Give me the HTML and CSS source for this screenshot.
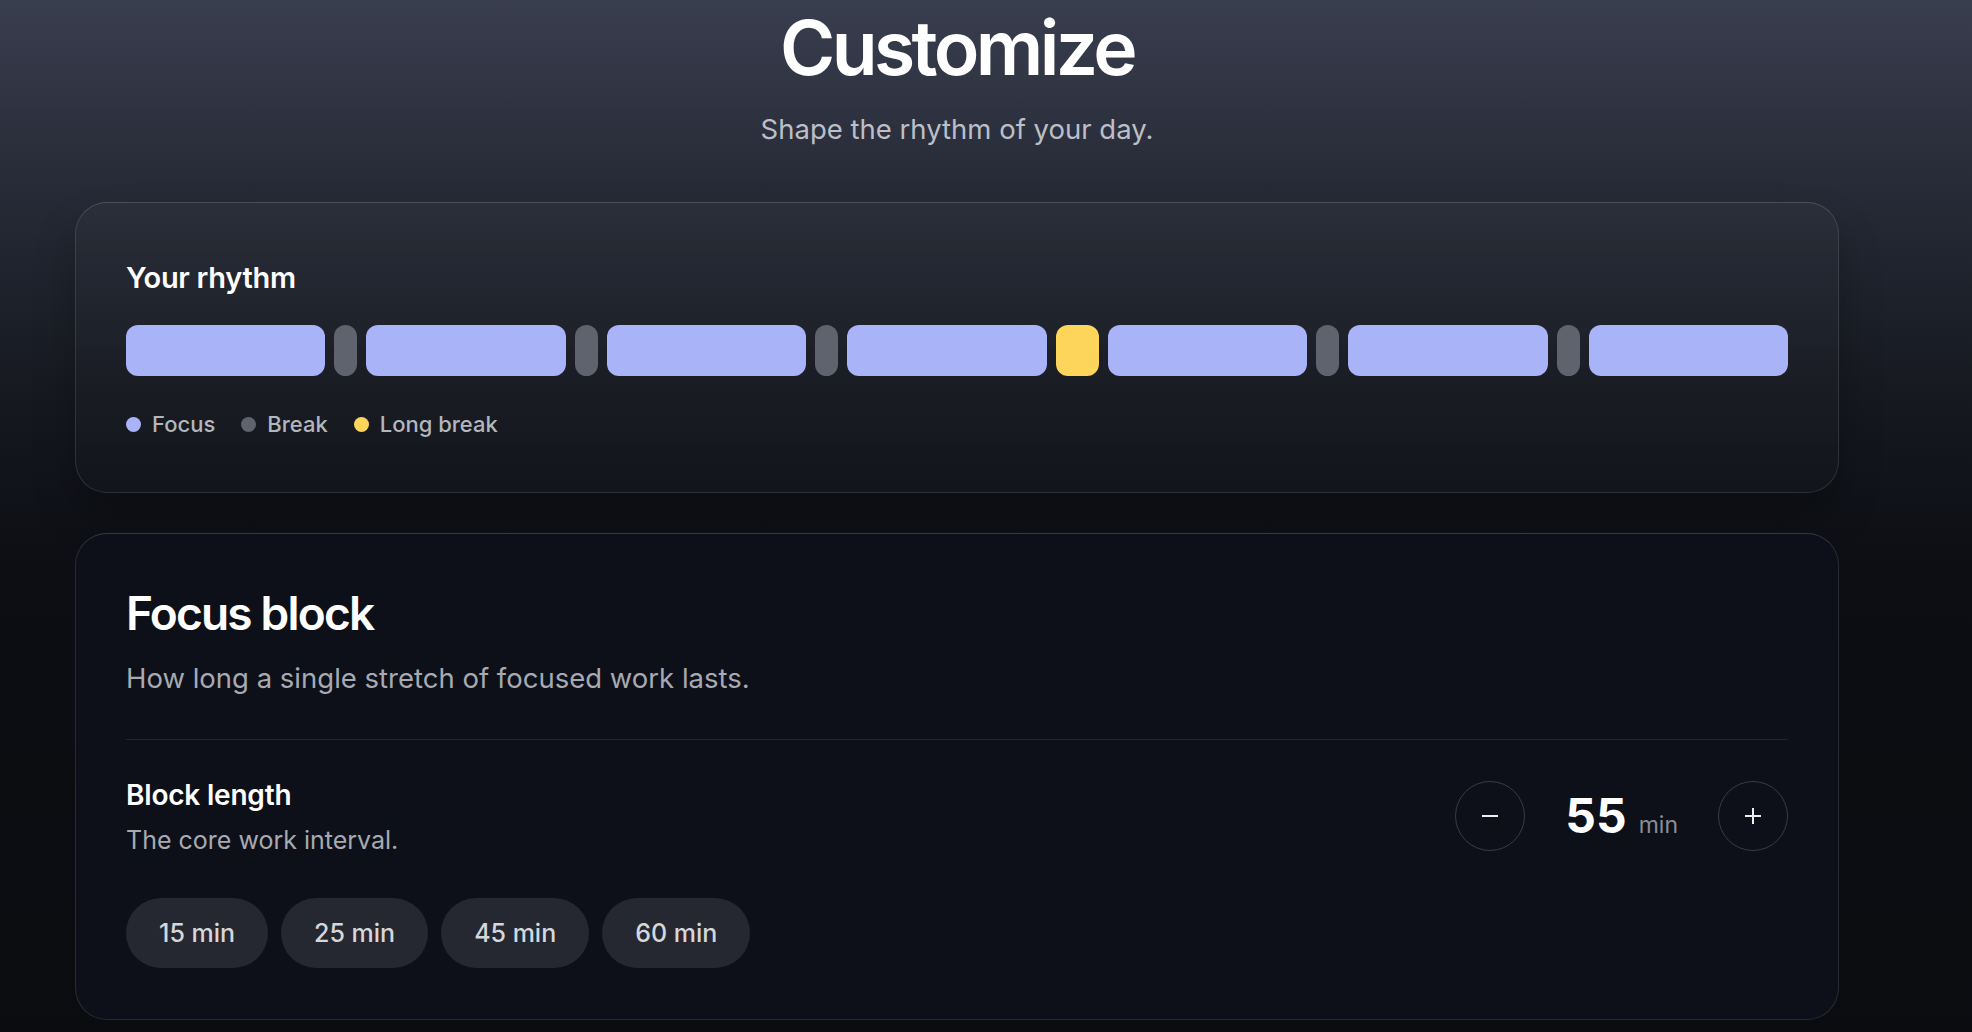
FILE: index.html
```html
<!DOCTYPE html>
<html lang="en">
<head>
  <meta charset="UTF-8" />
  <meta name="viewport" content="width=device-width, initial-scale=1.0"/>
  <title>Customize</title>
  <link rel="stylesheet" href="styles.css">
</head>
<body>
  <div class="page">
    <header class="page-head">
      <h1>Customize</h1>
      <p class="tagline">Shape the rhythm of your day.</p>
    </header>

    <section class="card rhythm-card">
      <h2 class="card-label">Your rhythm</h2>
      <div class="rhythm-bar">
        <div class="seg focus"></div>
        <div class="seg break"></div>
        <div class="seg focus"></div>
        <div class="seg break"></div>
        <div class="seg focus"></div>
        <div class="seg break"></div>
        <div class="seg focus"></div>
        <div class="seg long"></div>
        <div class="seg focus"></div>
        <div class="seg break"></div>
        <div class="seg focus"></div>
        <div class="seg break"></div>
        <div class="seg focus"></div>
      </div>
      <div class="legend">
        <span class="legend-item"><i class="dot focus"></i>Focus</span>
        <span class="legend-item"><i class="dot break"></i>Break</span>
        <span class="legend-item"><i class="dot long"></i>Long break</span>
      </div>
    </section>

    <section class="card block-card">
      <h2 class="block-title">Focus block</h2>
      <p class="block-desc">How long a single stretch of focused work lasts.</p>

      <div class="setting">
        <div class="setting-row">
          <div class="setting-text">
            <div class="setting-name">Block length</div>
            <div class="setting-hint">The core work interval.</div>
          </div>
          <div class="stepper">
            <button class="step-btn" id="minusBtn" aria-label="Decrease">
              <svg width="18" height="18" viewBox="0 0 18 18"><line x1="1" y1="9" x2="17" y2="9" /></svg>
            </button>
            <div class="step-value"><span id="blockValue">55</span><small>min</small></div>
            <button class="step-btn" id="plusBtn" aria-label="Increase">
              <svg width="18" height="18" viewBox="0 0 18 18"><line x1="1" y1="9" x2="17" y2="9" /><line x1="9" y1="1" x2="9" y2="17" /></svg>
            </button>
          </div>
        </div>

        <div class="presets">
          <button class="chip">15 min</button>
          <button class="chip">25 min</button>
          <button class="chip">45 min</button>
          <button class="chip">60 min</button>
        </div>
      </div>
    </section>
  </div>

  <script>
    const blockValue = document.getElementById('blockValue');
    let minutes = 55;

    function setMinutes(m) {
      minutes = Math.max(5, Math.min(120, m));
      blockValue.textContent = minutes;
    }

    document.getElementById('minusBtn').onclick = () => setMinutes(minutes - 5);
    document.getElementById('plusBtn').onclick = () => setMinutes(minutes + 5);
    document.querySelectorAll('.chip').forEach(chip => {
      chip.onclick = () => setMinutes(parseInt(chip.textContent, 10));
    });
  </script>
</body>
</html>
```

FILE: styles.css
```css
* {
  box-sizing: border-box;
}

html, body {
  margin: 0;
  min-height: 100%;
}

body {
  font-family: Inter, "Noto Sans", sans-serif;
  color: #fff;
  background: linear-gradient(180deg, #393e4f 0%, #272b37 18%, #161920 38%, #0c0e13 55%, #0a0c10 100%);
  min-height: 100vh;
  overflow: hidden;
}

.page {
  width: 1764px;
  margin-left: 75px;
}

.page-head {
  text-align: center;
  padding-top: 7px;
}

h1 {
  margin: 0;
  font-size: 75px;
  font-weight: 600;
  line-height: 82px;
  letter-spacing: -3.6px;
}

.tagline {
  margin: 21.5px 0 0;
  font-size: 27.5px;
  line-height: 36px;
  color: #bcbfc7;
}

.card {
  border: 1px solid rgba(255, 255, 255, 0.11);
  border-top-color: rgba(255, 255, 255, 0.17);
  border-radius: 32px;
  padding: 0 50px;
}

.rhythm-card {
  margin-top: 55px;
  padding-top: 57px;
  padding-bottom: 54px;
  background: linear-gradient(180deg, rgba(255, 255, 255, 0.025), rgba(255, 255, 255, 0.01));
  box-shadow: 0 24px 40px rgba(0, 0, 0, 0.25);
}

.card-label {
  margin: 0;
  font-size: 29px;
  font-weight: 600;
  line-height: 36px;
  letter-spacing: -0.3px;
}

.rhythm-bar {
  display: flex;
  gap: 9px;
  height: 51px;
  margin-top: 29px;
}

.seg {
  border-radius: 12px;
}

.seg.focus {
  flex: 1;
  background: #a9b3f7;
}

.seg.break {
  width: 23px;
  border-radius: 12px;
  background: #5f636d;
}

.seg.long {
  width: 43px;
  background: #fdd55b;
}

.legend {
  display: flex;
  gap: 26px;
  margin-top: 35px;
  font-size: 22px;
  font-weight: 500;
  line-height: 27px;
  color: #b3b6bd;
}

.legend-item {
  display: flex;
  align-items: center;
  gap: 11px;
}

.dot {
  width: 15px;
  height: 15px;
  border-radius: 50%;
}

.dot.focus { background: #a9b3f7; }
.dot.break { background: #5f636d; }
.dot.long { background: #fdd55b; }

.block-card {
  margin-top: 40px;
  padding-top: 52px;
  padding-bottom: 51px;
  background: #0d1018;
}

.block-title {
  margin: 0;
  font-size: 46px;
  font-weight: 600;
  line-height: 55px;
  letter-spacing: -1.8px;
}

.block-desc {
  margin: 18px 0 0;
  font-size: 27.5px;
  line-height: 39px;
  color: #a7aab2;
}

.setting {
  margin-top: 41px;
  border-top: 1px solid rgba(255, 255, 255, 0.09);
  padding-top: 37px;
}

.setting-row {
  display: flex;
  justify-content: space-between;
  align-items: center;
}

.setting-name {
  font-size: 28px;
  font-weight: 600;
  line-height: 36px;
  letter-spacing: -0.2px;
}

.setting-hint {
  margin-top: 9px;
  font-size: 25px;
  line-height: 36px;
  color: #a7aab2;
}

.stepper {
  display: flex;
  align-items: center;
  gap: 40px;
  margin-top: -3px;
}

.step-btn {
  width: 70px;
  height: 70px;
  border-radius: 50%;
  border: 1px solid #383c45;
  background: transparent;
  display: flex;
  align-items: center;
  justify-content: center;
  padding: 0;
  cursor: pointer;
}

.step-btn svg {
  stroke: #eceef2;
  stroke-width: 2;
}

.step-value {
  display: flex;
  align-items: baseline;
  gap: 12px;
  font-size: 48px;
  font-weight: 700;
  line-height: 1;
}

.step-value small {
  font-size: 23px;
  font-weight: 400;
  color: #8a8e97;
}

.presets {
  display: flex;
  gap: 13px;
  margin-top: 40px;
}

.chip {
  height: 70px;
  padding: 0 33px;
  border: none;
  border-radius: 35px;
  background: #252830;
  color: #d5d7dc;
  font-family: inherit;
  font-size: 25px;
  font-weight: 500;
  cursor: pointer;
}

.chip:hover {
  background: #2e323b;
}
```
